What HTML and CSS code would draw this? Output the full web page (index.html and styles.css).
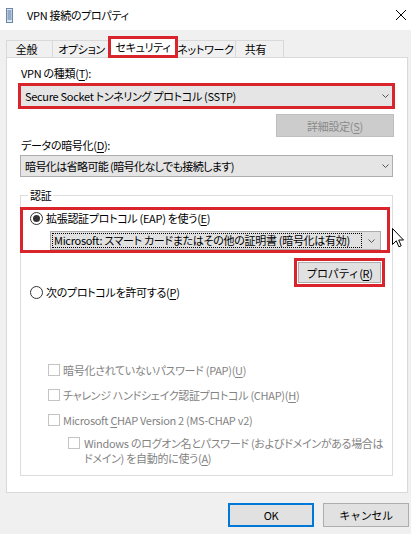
FILE: index.html
```html
<!DOCTYPE html>
<html lang="ja">

<head>
    <meta charset="UTF-8">
    <meta name="viewport" content="width=device-width, initial-scale=1.0">
    <title>VPN 接続のプロパティ</title>
    <link rel="stylesheet" href="styles.css">
</head>

<body>
    <div class="window">
        <div class="titlebar">
            <svg class="app-icon" viewBox="0 0 7 15">
                <rect x="0.5" y="0.5" width="6" height="14" fill="#dde6f1" stroke="#6a87ab" />
                <path d="M1.5 3h4M1.5 5h4M1.5 7h4M1.5 9h4M1.5 11h4" stroke="#4c6f9c" stroke-width="1" />
            </svg>
            <span class="title">VPN 接続のプロパティ</span>
            <svg class="close" viewBox="0 0 10 10">
                <path d="M0 0L10 10M10 0L0 10" stroke="#000" stroke-width="1" />
            </svg>
        </div>

        <div class="tabs">
            <div class="tab tab-general">全般</div>
            <div class="tab tab-options">オプション</div>
            <div class="tab tab-security mark">セキュリティ</div>
            <div class="tab tab-network">ネットワーク</div>
            <div class="tab tab-share">共有</div>
        </div>

        <div class="panel">
            <div class="label">VPN の種類(<u>T</u>):</div>
            <div class="combo mark">
                <span class="combo-text">Secure Socket トンネリング プロトコル (SSTP)</span>
                <svg class="chevron" viewBox="0 0 7 4"><path d="M0.5 0.5L3.5 3.5L6.5 0.5" fill="none" stroke="#555" /></svg>
            </div>

            <button class="btn btn-disabled btn-advanced">詳細設定(<u>S</u>)</button>

            <div class="label label-tight">データの暗号化(<u>D</u>):</div>
            <div class="combo">
                <span class="combo-text narrow">暗号化は省略可能 (暗号化なしでも接続します)</span>
                <svg class="chevron" viewBox="0 0 7 4"><path d="M0.5 0.5L3.5 3.5L6.5 0.5" fill="none" stroke="#555" /></svg>
            </div>

            <fieldset class="group">
                <legend>認証</legend>

                <div class="eap mark">
                    <div class="option">
                        <span class="radio checked"></span>
                        <span>拡張認証プロトコル (EAP) を使う(<u>E</u>)</span>
                    </div>
                    <div class="combo combo-eap">
                        <span class="combo-text">Microsoft: スマート カードまたはその他の証明書 (暗号化は有効)</span>
                        <svg class="chevron" viewBox="0 0 7 4"><path d="M0.5 0.5L3.5 3.5L6.5 0.5" fill="none" stroke="#555" /></svg>
                    </div>
                </div>

                <button class="btn btn-props mark">プロパティ(<u>R</u>)</button>

                <div class="option option-other">
                    <span class="radio"></span>
                    <span>次のプロトコルを許可する(<u>P</u>)</span>
                </div>

                <div class="check check-first">
                    <span class="box"></span>
                    <span>暗号化されていないパスワード (PAP)(<u>U</u>)</span>
                </div>
                <div class="check">
                    <span class="box"></span>
                    <span>チャレンジ ハンドシェイク認証プロトコル (CHAP)(<u>H</u>)</span>
                </div>
                <div class="check">
                    <span class="box"></span>
                    <span>Microsoft <u>C</u>HAP Version 2 (MS-CHAP v2)</span>
                </div>
                <div class="check check-sub">
                    <span class="box"></span>
                    <span>Windows のログオン名とパスワード (およびドメインがある場合は<br>ドメイン) を自動的に使う(<u>A</u>)</span>
                </div>
            </fieldset>
        </div>

        <div class="actions">
            <button class="btn btn-default">OK</button>
            <button class="btn">キャンセル</button>
        </div>

        <!-- マウスカーソル -->
        <svg class="cursor" viewBox="0 0 12 20">
            <path d="M0.5 0.5V16.5L4.3 12.8L6.9 18.8L9.2 17.8L6.7 12H11.5Z" fill="#fff" stroke="#000" stroke-width="1" stroke-linejoin="miter" />
        </svg>
    </div>
</body>

</html>
```

FILE: styles.css
```css
* {
    box-sizing: border-box;
}

body {
    margin: 0;
    background-color: #f0f0f0;
    font-family: "Noto Sans CJK JP", "Noto Sans", sans-serif;
    font-size: 11px;
    font-feature-settings: "palt";
    letter-spacing: -0.3px;
    color: #000;
}

u {
    text-decoration-thickness: 1px;
    text-underline-offset: 2px;
}

.window {
    position: relative;
    width: 411px;
    height: 534px;
    overflow: hidden;
}

/* タイトルバー */
.titlebar {
    display: flex;
    align-items: center;
    height: 30px;
    padding-left: 6px;
    background-color: #fff;
}

.app-icon {
    width: 7px;
    height: 15px;
    margin-right: 14px;
}

.title {
    flex: 1;
    font-size: 11px;
    line-height: 16px;
}

.close {
    width: 10px;
    height: 10px;
    margin-right: 5px;
}

/* 注釈の赤枠 */
.mark {
    outline: 3px solid #da242c;
}

/* タブ */
.tabs {
    display: flex;
    align-items: flex-end;
    height: 27px;
    padding-left: 6px;
}

.tab {
    height: 17px;
    line-height: 16px;
    text-align: center;
    background-color: #f0f0f0;
    border: 1px solid #d9d9d9;
    border-bottom: none;
    white-space: nowrap;
}

.tab-general {
    width: 47px;
    padding-right: 6px;
}

.tab-options {
    width: 59px;
    margin-left: -1px;
}

.tab-security {
    width: 64px;
    height: 16px;
    margin-bottom: 2px;
    line-height: 16px;
    background-color: #fff;
    border: none;
    position: relative;
    z-index: 1;
}

.tab-network {
    width: 61px;
}

.tab-share {
    width: 49px;
    margin-left: -1px;
    padding-right: 8px;
}

/* タブの中身 */
.panel {
    width: 402px;
    margin-left: 6px;
    padding: 7px 13px 16px;
    background-color: #fff;
    border: 1px solid #d9d9d9;
}

.label {
    line-height: 16px;
    padding-left: 1px;
}

.label-tight {
    margin-top: 1px;
    line-height: 15px;
}

.combo {
    display: flex;
    align-items: center;
    width: 373px;
    height: 22px;
    padding-left: 4px;
    background-color: #e5e5e5;
    border: 1px solid #adadad;
    white-space: nowrap;
}

.panel > .combo.mark {
    margin-top: 4px;
    outline-offset: -1px;
}

.panel > .label-tight + .combo {
    margin-top: 2px;
}

.combo-text {
    flex: 1;
    min-width: 0;
    overflow: hidden;
    line-height: 16px;
}

.narrow {
    letter-spacing: -0.6px;
}

.chevron {
    flex-shrink: 0;
    width: 7px;
    height: 4px;
    margin: 0 3px 0 6px;
}

.btn {
    display: block;
    height: 23px;
    padding: 0;
    font-family: inherit;
    font-size: 11px;
    letter-spacing: -0.3px;
    line-height: 16px;
    color: #000;
    background-color: #e1e1e1;
    border: 1px solid #adadad;
}

.btn-disabled {
    color: #8a8a8a;
    background-color: #cccccc;
    border-color: #bfbfbf;
}

.btn-advanced {
    width: 118px;
    margin: 7px 0 0 auto;
}

/* 認証グループ */
.group {
    width: 373px;
    min-width: 0;
    margin: 11px 0 0;
    padding: 7px 0 9px;
    border: 1px solid #dcdcdc;
}

.group legend {
    margin-left: 7px;
    padding: 0 2px;
    line-height: 15px;
}

.eap {
    margin: 0 5px 0 2px;
}

.option {
    display: flex;
    align-items: center;
    height: 16px;
    line-height: 16px;
    white-space: nowrap;
}

.radio {
    display: flex;
    flex-shrink: 0;
    align-items: center;
    justify-content: center;
    width: 13px;
    height: 13px;
    margin: 0 3px 0 7px;
    border: 1px solid #333;
    border-radius: 50%;
    background-color: #fff;
}

.radio.checked::after {
    content: "";
    width: 7px;
    height: 7px;
    border-radius: 50%;
    background-color: #333;
}

.option-other {
    margin-top: 1px;
}

.option-other .radio {
    margin-left: 9px;
}

.combo-eap {
    width: auto;
    height: 19px;
    margin: 5px 6px 0 27px;
    padding: 1px 0 1px 1px;
    background-color: #e1e1e1;
}

.combo-eap .combo-text {
    height: 15px;
    padding-left: 1px;
    line-height: 13px;
    border: 1px dotted #000;
}

.combo-eap .chevron {
    margin: 0 5px 0 6px;
}

.btn-props {
    width: 83px;
    height: 21px;
    margin: 12px 11px 0 auto;
    outline-offset: 1px;
}

.check {
    display: flex;
    align-items: center;
    height: 16px;
    margin: 9px 0 0 27px;
    line-height: 16px;
    color: #838383;
    white-space: nowrap;
}

.check-first {
    margin-top: 62px;
}

.box {
    flex-shrink: 0;
    width: 12px;
    height: 12px;
    margin-right: 3px;
    background-color: #fff;
    border: 1px solid #c4c4c4;
}

.check-sub {
    align-items: flex-start;
    height: auto;
    margin: 8px 0 0 47px;
    line-height: 15px;
}

.check-sub .box {
    margin: 1px 4px 0 0;
}

/* 下のボタン */
.actions {
    display: flex;
    justify-content: flex-end;
    gap: 9px;
    padding: 10px 2px 0 0;
}

.actions .btn {
    width: 86px;
    height: 24px;
}

.btn-default {
    border: 2px solid #0078d7;
}

.cursor {
    position: absolute;
    left: 392px;
    top: 228px;
    width: 12px;
    height: 20px;
    z-index: 2;
}
```
